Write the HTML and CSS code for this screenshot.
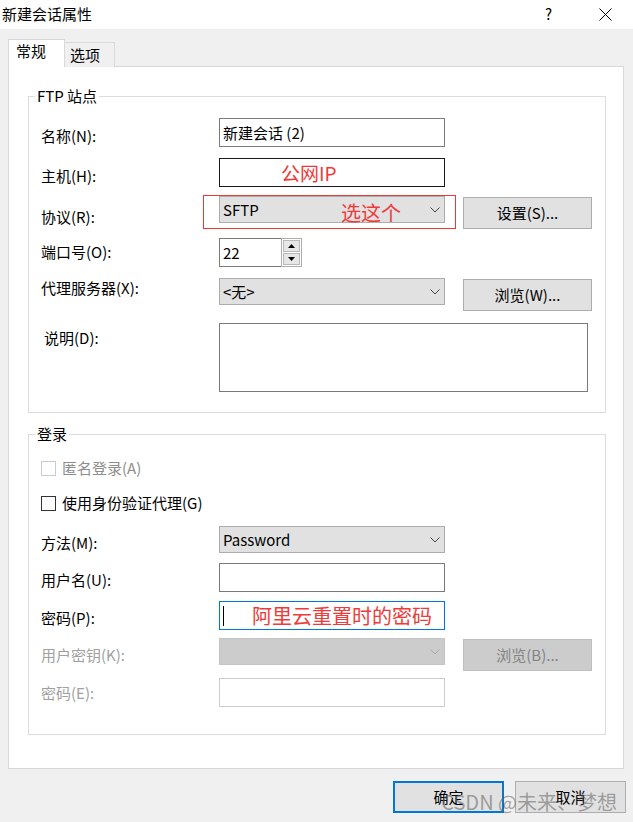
FILE: index.html
```html
<!DOCTYPE html>
<html lang="zh-CN">
<head>
<meta charset="UTF-8">
<title>新建会话属性</title>
<link rel="stylesheet" href="styles.css">
</head>
<body>

<div class="TitleBar">
  <span class="TitleText">新建会话属性</span>
  <span class="HelpBtn">?</span>
  <svg class="CloseBtn" width="13" height="13" viewBox="0 0 13 13"><path d="M0.5 0.5L12.5 12.5M12.5 0.5L0.5 12.5" stroke="#000" stroke-width="1" fill="none"/></svg>
</div>

<div class="Tabs">
  <div class="Tab active">常规</div>
  <div class="Tab">选项</div>
</div>

<div class="Panel">
  <div class="Group" id="siteGroup">
    <div class="GroupTitle">FTP 站点</div>

    <div class="Row" id="rowName">
      <span class="Label">名称(N):</span>
      <div class="Input">新建会话 (2)</div>
    </div>

    <div class="Row" id="rowHost">
      <span class="Label">主机(H):</span>
      <div class="Input hover"><span class="Note">公网IP</span></div>
    </div>

    <div class="Row" id="rowProtocol">
      <span class="Label">协议(R):</span>
      <div class="Select">
        <span>SFTP</span>
        <svg class="Chevron" width="10" height="6" viewBox="0 0 10 6"><path d="M0.5 0.5L5 5L9.5 0.5" fill="none" stroke="#444"/></svg>
        <div class="Mark"></div>
        <span class="Note floating">选这个</span>
      </div>
      <div class="Btn">设置(S)...</div>
    </div>

    <div class="Row" id="rowPort">
      <span class="Label">端口号(O):</span>
      <div class="Spin">
        <div class="SpinInput">22</div>
        <div class="SpinBtns">
          <div class="SpinBtn"><svg width="7" height="4" viewBox="0 0 7 4"><path d="M0 4L3.5 0L7 4Z" fill="#000"/></svg></div>
          <div class="SpinBtn"><svg width="7" height="4" viewBox="0 0 7 4"><path d="M0 0L3.5 4L7 0Z" fill="#000"/></svg></div>
        </div>
      </div>
    </div>

    <div class="Row" id="rowProxy">
      <span class="Label">代理服务器(X):</span>
      <div class="Select">
        <span>&lt;无&gt;</span>
        <svg class="Chevron" width="10" height="6" viewBox="0 0 10 6"><path d="M0.5 0.5L5 5L9.5 0.5" fill="none" stroke="#444"/></svg>
      </div>
      <div class="Btn">浏览(W)...</div>
    </div>

    <div class="Row" id="rowDesc">
      <span class="Label">说明(D):</span>
      <div class="TextArea"></div>
    </div>
  </div>

  <div class="Group" id="loginGroup">
    <div class="GroupTitle">登录</div>

    <div class="Check disabled" id="checkAnon">
      <span class="Box"></span>
      <span>匿名登录(A)</span>
    </div>

    <div class="Check" id="checkAgent">
      <span class="Box"></span>
      <span>使用身份验证代理(G)</span>
    </div>

    <div class="Row" id="rowMethod">
      <span class="Label">方法(M):</span>
      <div class="Select">
        <span>Password</span>
        <svg class="Chevron" width="10" height="6" viewBox="0 0 10 6"><path d="M0.5 0.5L5 5L9.5 0.5" fill="none" stroke="#444"/></svg>
      </div>
    </div>

    <div class="Row" id="rowUser">
      <span class="Label">用户名(U):</span>
      <div class="Input"></div>
    </div>

    <div class="Row" id="rowPass">
      <span class="Label">密码(P):</span>
      <div class="Input focus"><span class="Caret"></span><span class="Note">阿里云重置时的密码</span></div>
    </div>

    <div class="Row disabled" id="rowKey">
      <span class="Label">用户密钥(K):</span>
      <div class="Select">
        <span></span>
        <svg class="Chevron" width="10" height="6" viewBox="0 0 10 6"><path d="M0.5 0.5L5 5L9.5 0.5" fill="none" stroke="#aaa"/></svg>
      </div>
      <div class="Btn">浏览(B)...</div>
    </div>

    <div class="Row disabled" id="rowPhrase">
      <span class="Label">密码(E):</span>
      <div class="Input"></div>
    </div>
  </div>
</div>

<div class="Footer">
  <div class="FooterBtn default">确定</div>
  <div class="FooterBtn">取消</div>
  <span class="Watermark">CSDN @未来、梦想</span>
</div>

</body>
</html>
```

FILE: styles.css
```css
* {
  box-sizing: border-box;
  margin: 0px;
  padding: 0px;
}

body {
  width: 633px;
  height: 822px;
  overflow: hidden;
  background-color: #f0f0f0;
  font-family: "Noto Sans CJK SC", "Noto Sans", sans-serif;
  font-size: 15px;
  line-height: 20px;
  color: #000;
}

.TitleBar {
  height: 29px;
  background-color: #fff;
  display: flex;
  align-items: center;
  padding: 0 0 2px 2px;
}

.TitleText {
  flex: 1;
}

.HelpBtn {
  margin-right: 47px;
}

.CloseBtn {
  margin: 2px 21px 0 0;
}

/* tabs */
.Tabs {
  display: flex;
  align-items: flex-end;
  height: 28px;
  margin: 10px 0 -1px 8px;
}

.Tab {
  width: 50px;
  height: 25px;
  padding: 2px 0 0 5px;
  border: 1px solid #d9d9d9;
  border-left: none;
  border-bottom: none;
  background-color: #f0f0f0;
}

.Tab.active {
  width: 57px;
  height: 28px;
  padding: 1px 0 0 7px;
  border-left: 1px solid #d9d9d9;
  background-color: #fff;
  position: relative;
  z-index: 1;
}

.Panel {
  width: 616px;
  height: 703px;
  margin-left: 8px;
  padding: 29px 0 0 19px;
  border: 1px solid #d9d9d9;
  background-color: #fff;
}

/* group boxes */
.Group {
  width: 578px;
  border: 1px solid #dcdcdc;
  padding: 0 0 20px 12px;
}

#loginGroup {
  margin-top: 21px;
  padding-bottom: 27px;
}

.GroupTitle {
  width: fit-content;
  margin: -11px 0 0 -6px;
  padding: 0 2px;
  background-color: #fff;
}

.Row {
  display: grid;
  grid-template-columns: 160px 226px 129px;
  column-gap: 18px;
  align-items: start;
}

.Label {
  padding-top: 7px;
  white-space: nowrap;
}

#rowName { margin-top: 12px; }
#rowName .Label { padding-top: 8px; }
#rowHost { margin-top: 11px; }
#rowHost .Label { padding-top: 8px; }
#rowProtocol { margin-top: 9px; }
#rowProtocol .Label { padding-top: 11px; }
#rowPort { margin-top: 9px; }
#rowPort .Label { padding-top: 4px; }
#rowProxy { margin-top: 11px; }
#rowProxy .Label { padding-top: 0px; }
#rowDesc { margin-top: 12px; }
#rowDesc .Label { padding: 5px 0 0 3px; }

#checkAnon { margin-top: 14px; }
#checkAgent { margin-top: 15px; }
#rowMethod { margin-top: 13px; }
#rowUser { margin-top: 10px; }
#rowPass { margin-top: 9px; }
#rowKey { margin-top: 8px; }
#rowPhrase { margin-top: 7px; }
#rowPhrase .Label { padding-top: 5px; }

/* controls */
.Input {
  height: 29px;
  border: 1px solid #7a7a7a;
  background-color: #fff;
  padding-left: 3px;
  display: flex;
  align-items: center;
}

.Input.hover {
  border-color: #1a1a1a;
  padding-left: 61px;
}

.Input.focus {
  border-color: #0078d7;
}

.Caret {
  width: 1px;
  height: 20px;
  background-color: #000;
  margin-right: 28px;
}

.Note {
  color: #f03a3a;
  font-size: 19px;
  line-height: 24px;
}

#rowPass .Note {
  font-size: 20px;
}

.Select {
  height: 27px;
  border: 1px solid #adadad;
  background-color: #e1e1e1;
  padding: 0 4px 0 3px;
  display: flex;
  align-items: center;
  justify-content: space-between;
  position: relative;
}

.Mark {
  position: absolute;
  left: -17px;
  top: -2px;
  width: 253px;
  height: 34px;
  border: 1px solid #e8393b;
}

.Note.floating {
  position: absolute;
  left: 121px;
  top: 4px;
  font-size: 20px;
}

.Btn {
  height: 32px;
  margin-top: 1px;
  border: 1px solid #adadad;
  background-color: #e1e1e1;
  display: flex;
  align-items: center;
  justify-content: center;
}

.TextArea {
  width: 369px;
  height: 69px;
  border: 1px solid #7a7a7a;
}

.Spin {
  display: flex;
}

.SpinInput {
  width: 62px;
  height: 29px;
  border: 1px solid #7a7a7a;
  border-right: none;
  padding-left: 3px;
  display: flex;
  align-items: center;
}

.SpinBtns {
  width: 21px;
  height: 29px;
  border: 1px solid #adadad;
  padding: 1px;
  display: flex;
  flex-direction: column;
  gap: 1px;
}

.SpinBtn {
  flex: 1;
  border: 1px solid #b9b9b9;
  background-color: #e6e6e6;
  display: flex;
  align-items: center;
  justify-content: center;
}

/* checkboxes */
.Check {
  height: 20px;
  display: flex;
  align-items: center;
  gap: 6px;
}

.Box {
  width: 15px;
  height: 15px;
  border: 1px solid #333;
  background-color: #fff;
}

.Check.disabled {
  color: #8d8d8d;
}

.Check.disabled .Box {
  border-color: #cccccc;
}

/* disabled rows */
.Row.disabled .Label {
  color: #a0a0a0;
}

.Row.disabled .Select {
  background-color: #cccccc;
  border-color: #c4c4c4;
}

.Row.disabled .Btn {
  background-color: #cccccc;
  border-color: #bfbfbf;
  color: #838383;
}

.Row.disabled .Input {
  border-color: #cccccc;
}

/* footer */
.Footer {
  display: flex;
  justify-content: flex-end;
  gap: 11px;
  margin-top: 12px;
  padding-right: 7px;
  position: relative;
}

.FooterBtn {
  width: 111px;
  height: 32px;
  border: 1px solid #adadad;
  background-color: #e1e1e1;
  display: flex;
  align-items: center;
  justify-content: center;
}

.FooterBtn.default {
  border: 2px solid #0078d7;
}

.Watermark {
  position: absolute;
  right: 16px;
  top: 9px;
  font-size: 20px;
  line-height: 24px;
  color: rgba(95, 95, 95, 0.55);
  white-space: nowrap;
}
```
